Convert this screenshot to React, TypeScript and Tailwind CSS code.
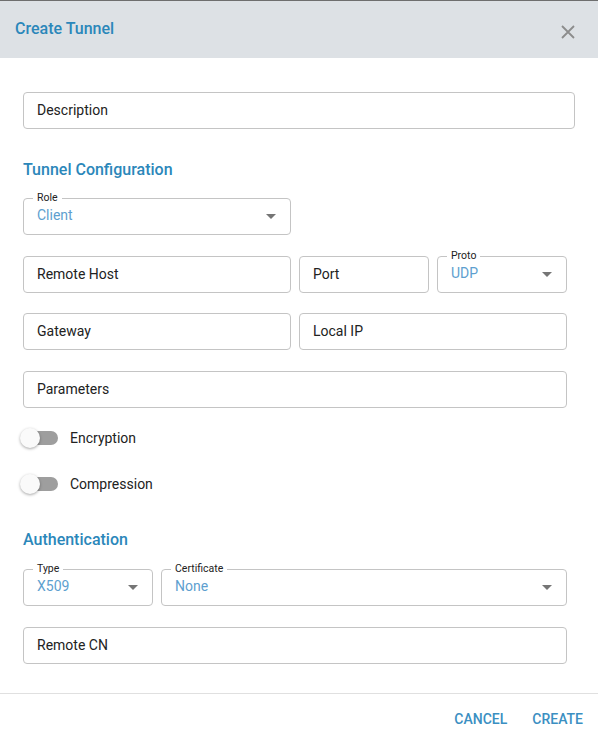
import React from "react";

const font = { fontFamily: "Roboto, 'Liberation Sans', sans-serif" };

function Field({ label, className = "" }: { label: string; className?: string }) {
  return (
    <div className={`shrink-0 h-[37px] rounded-[4px] border border-[#c4c4c4] flex items-center pl-[13px] text-[14px] text-[#222] ${className}`}>
      {label}
    </div>
  );
}

function Select({ label, value, className = "" }: { label: string; value: string; className?: string }) {
  return (
    <div className={`shrink-0 relative h-[37px] rounded-[4px] border border-[#c4c4c4] flex items-center pl-[13px] pr-[14px] ${className}`}>
      <span className="absolute left-[9px] top-[-7px] bg-white px-[4px] text-[10.5px] leading-[12px] text-[#222]">{label}</span>
      <span className="text-[14px] text-[#5e9fcf] mt-[-3px]">{value}</span>
      <span className="ml-auto w-0 h-0 border-l-[5px] border-r-[5px] border-t-[5px] border-l-transparent border-r-transparent border-t-[#757575]" />
    </div>
  );
}

function Toggle({ label }: { label: string }) {
  return (
    <div className="shrink-0 h-[38px] flex items-center ml-[-3px]">
      <div className="relative w-[38px] h-[20px] flex items-center">
        <div className="absolute left-[7px] w-[31px] h-[14px] rounded-full bg-[#9e9e9e]" />
        <div className="absolute left-0 w-[20px] h-[20px] rounded-full bg-[#fafafa] shadow-[0_1px_3px_rgba(0,0,0,0.35)]" />
      </div>
      <span className="ml-[12px] text-[14px] text-[#222]">{label}</span>
    </div>
  );
}

export default function App() {
  return (
    <div className="w-[601px] h-[733px] bg-white overflow-hidden" style={font}>
      <div className="w-[598px] h-[733px] flex flex-col border-t border-[#6e6e6e]">
        <div className="shrink-0 h-[57px] bg-[#dde1e5] flex items-center pl-[15px] pr-[22px]">
          <span className="text-[16px] font-medium text-[#2b87ba] mt-[-1px]">Create Tunnel</span>
          <svg className="ml-auto mt-[4px]" width="16" height="16" viewBox="0 0 16 16">
            <path d="M2 2L14 14M14 2L2 14" stroke="#8c8c8c" strokeWidth="1.8" />
          </svg>
        </div>
        <div className="shrink-0 px-[23px] flex flex-col">
          <Field label="Description" className="mt-[34px] w-[552px]" />
          <div className="shrink-0 mt-[31px] h-[20px] leading-[20px] text-[16px] font-medium text-[#2b87ba]">Tunnel Configuration</div>
          <Select label="Role" value="Client" className="mt-[18px] w-[268px]" />
          <div className="shrink-0 mt-[21px] flex gap-[8px] w-[544px]">
            <Field label="Remote Host" className="w-[268px]" />
            <Field label="Port" className="w-[130px]" />
            <Select label="Proto" value="UDP" className="w-[130px]" />
          </div>
          <div className="shrink-0 mt-[20px] flex gap-[8px] w-[544px]">
            <Field label="Gateway" className="w-[268px]" />
            <Field label="Local IP" className="w-[268px]" />
          </div>
          <Field label="Parameters" className="mt-[21px] w-[544px]" />
          <div className="shrink-0 mt-[11px] flex flex-col gap-[8px]">
            <Toggle label="Encryption" />
            <Toggle label="Compression" />
          </div>
          <div className="shrink-0 mt-[27px] h-[20px] leading-[20px] text-[16px] font-medium text-[#2b87ba]">Authentication</div>
          <div className="shrink-0 mt-[19px] flex gap-[8px] w-[544px]">
            <Select label="Type" value="X509" className="w-[130px]" />
            <Select label="Certificate" value="None" className="w-[406px]" />
          </div>
          <Field label="Remote CN" className="mt-[21px] w-[544px]" />
        </div>
        <div className="shrink-0 mt-[29px] border-t border-[#e0e0e0]" />
        <div className="shrink-0 flex justify-end items-start gap-[25px] pr-[15px] pt-[15px] h-[39px] leading-[20px] text-[14px] font-medium text-[#3b8fc2]">
          <span>CANCEL</span>
          <span>CREATE</span>
        </div>
      </div>
    </div>
  );
}
